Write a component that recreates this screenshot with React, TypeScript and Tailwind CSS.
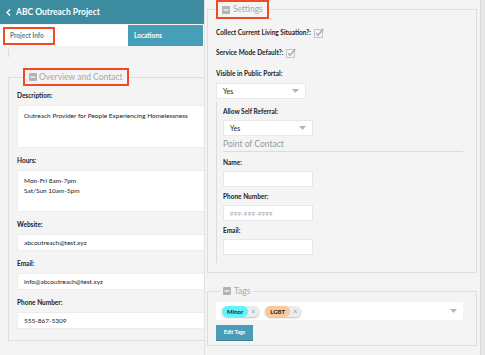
import { ReactNode } from "react";

function Minus() {
  return (
    <svg width="8" height="8" viewBox="0 0 8 8" className="shrink-0">
      <rect x="0" y="0" width="8" height="8" rx="1" fill="#b3b3b3" />
      <rect x="1.5" y="3.2" width="5" height="1.6" fill="#ececec" />
    </svg>
  );
}

function Check() {
  return (
    <svg width="10" height="10" viewBox="0 0 10 10" className="shrink-0">
      <rect x="0.5" y="1.5" width="8" height="8" fill="#f4f4f4" stroke="#c4c4c4" />
      <path d="M2.2 5.2 L4 7.2 L9.2 1.2" fill="none" stroke="#a8a8a8" strokeWidth="1.3" />
    </svg>
  );
}

function Caret() {
  return (
    <svg width="7" height="4" viewBox="0 0 7 4">
      <path d="M0 0 H7 L3.5 4 Z" fill="#b5b5b5" />
    </svg>
  );
}

function Label({ children }: { children: ReactNode }) {
  return <div className="text-[6.5px] font-bold text-[#222] leading-[8px]">{children}</div>;
}

function Field({ label, value, h = "h-[17px]", multi }: { label: string; value?: ReactNode; h?: string; multi?: boolean }) {
  return (
    <div className="flex flex-col gap-[5px]">
      <Label>{label}</Label>
      <div className={`${h} bg-white border border-[#ececec] px-[6px] ${multi ? "pt-[5px]" : "flex items-center"} text-[6.5px] text-[#222] leading-[10px]`}>
        {value}
      </div>
    </div>
  );
}

function Select({ value }: { value: string }) {
  return (
    <div className="w-[90px] h-[16px] bg-white border border-[#e8e8e8] flex items-center justify-between px-[6px] text-[7px] text-[#222]">
      <span>{value}</span>
      <Caret />
    </div>
  );
}

function SmallInput({ placeholder }: { placeholder?: string }) {
  return (
    <div className="w-[90px] h-[16px] bg-white border border-[#e8e8e8] flex items-center px-[6px] text-[6px] text-[#999] tracking-[0.3px]">
      {placeholder}
    </div>
  );
}

function Tag({ name, color }: { name: string; color: string }) {
  return (
    <div className="flex items-center h-[11px] rounded-full bg-[#ececec] shadow-[0_1px_2px_rgba(0,0,0,0.25)] pr-[4px]">
      <span className={`h-[11px] flex items-center rounded-full px-[5px] text-[6px] font-bold text-[#222] ${color}`}>{name}</span>
      <span className="ml-[3px] text-[7px] text-[#999] leading-none">×</span>
    </div>
  );
}

export default function App() {
  return (
    <div className="w-[485px] h-[355px] overflow-hidden flex bg-[#f4f4f4] font-['Lato','Liberation_Sans',sans-serif]">
      {/* left column */}
      <div className="w-[205px] shrink-0 flex flex-col border-r border-[#e2e2e2] overflow-hidden">
        <div className="h-[24px] bg-[#3c8b9e] flex items-center gap-[5px] px-[6px] text-white text-[8.5px] font-bold">
          <svg width="5" height="7" viewBox="0 0 5 7">
            <path d="M4 0.5 L1 3.5 L4 6.5" fill="none" stroke="white" strokeWidth="1.4" />
          </svg>
          <span>ABC Outreach Project</span>
        </div>
        <div className="h-[21px] flex mt-[1px] bg-white">
          <div className="w-[128px] bg-white flex items-center pl-[3px]">
            <div className="h-[18px] w-[52px] border-2 border-[#f04b24] flex items-center pl-[5px] text-[6.5px] font-bold text-[#3c8b9e]">
              Project Info
            </div>
          </div>
          <div className="w-[75px] bg-[#469fb7] flex items-center pl-[6px] text-[6.5px] font-bold text-white">Locations</div>
        </div>
        <div className="flex-1 bg-[#f4f4f4] pl-[8px]">
          <div className="ml-0 mt-[3px] h-[8px] border-l border-[#dcdcdc]" />
          <fieldset className="mt-[11px] border-l border-t border-b border-[#dedede] pl-[8px] pb-[11px] w-[210px]">
            <legend className="ml-[6px] h-[18px] border-2 border-[#f04b24] flex items-center gap-[2px] px-[4px] text-[8.5px] text-[#a8a8a8]">
              <Minus />
              <span>Overview and Contact</span>
            </legend>
            <div className="flex flex-col gap-[9px] pt-[6px]">
              <Field label="Description:" h="h-[43px]" multi value="Outreach Provider for People Experiencing Homelessness" />
              <Field
                label="Hours:"
                h="h-[42px]"
                multi
                value={
                  <>
                    <div>Mon-Fri 8am-7pm</div>
                    <div>Sat/Sun 10am-5pm</div>
                  </>
                }
              />
              <Field label="Website:" value="abcoutreach@test.xyz" />
              <Field label="Email:" value="info@abcoutreach@test.xyz" />
              <Field label="Phone Number:" value="555-867-5309" />
            </div>
          </fieldset>
        </div>
      </div>

      {/* right column */}
      <div className="flex-1 flex flex-col pl-[2px] pr-[3px]">
        <fieldset className="border border-[#dedede] pl-[8px] pr-[13px] pb-[6px] h-[273px]">
          <legend className="ml-0 h-[19px] border-2 border-[#f04b24] flex items-center gap-[3px] px-[4px] text-[8.5px] text-[#a8a8a8]">
            <Minus />
            <span>Settings</span>
          </legend>
          <div className="flex flex-col pt-[9px]">
            <div className="flex items-center gap-[3px] h-[10px]">
              <Label>Collect Current Living Situation?:</Label>
              <Check />
            </div>
            <div className="flex items-center gap-[3px] h-[10px] mt-[10px]">
              <Label>Service Mode Default?:</Label>
              <Check />
            </div>
            <div className="mt-[12px]">
              <Label>Visible in Public Portal:</Label>
            </div>
            <div className="mt-[5px]">
              <Select value="Yes" />
            </div>
            <div className="mt-[3px] border-l border-[#dcdcdc] pl-[6px] pt-[6px] pb-[8px] flex flex-col">
              <Label>Allow Self Referral:</Label>
              <div className="mt-[4px]">
                <Select value="Yes" />
              </div>
              <div className="mt-[3px] text-[8.5px] text-[#999] border-b border-[#dcdcdc] pb-[1px] leading-[11px]">Point of Contact</div>
              <div className="mt-[7px] flex flex-col gap-[4px]">
                <Label>Name:</Label>
                <SmallInput />
              </div>
              <div className="mt-[6px] flex flex-col gap-[4px]">
                <Label>Phone Number:</Label>
                <SmallInput placeholder="999-999-9999" />
              </div>
              <div className="mt-[6px] flex flex-col gap-[4px]">
                <Label>Email:</Label>
                <SmallInput />
              </div>
            </div>
          </div>
        </fieldset>

        <fieldset className="mt-[13px] border border-[#dedede] pl-[8px] pr-[13px] h-[60px]">
          <legend className="ml-[5px] flex items-center gap-[3px] px-[2px] text-[8.5px] text-[#a8a8a8] leading-[10px]">
            <Minus />
            <span>Tags</span>
          </legend>
          <div className="mt-[6px] h-[18px] bg-white flex items-center justify-between px-[6px]">
            <div className="flex items-center gap-[6px]">
              <Tag name="Minor" color="bg-[#62f3f8]" />
              <Tag name="LGBT" color="bg-[#f8c99b]" />
            </div>
            <Caret />
          </div>
          <div className="mt-[5px] w-[37px] h-[16px] bg-[#4a9db6] border-b border-[#3a8298] flex items-center justify-center text-[5.5px] font-bold text-white">
            Edit Tags
          </div>
        </fieldset>
      </div>

      {/* scrollbar strip */}
      <div className="w-[5px] shrink-0 bg-[#e6e6e6] border-l border-[#dadada]" />
    </div>
  );
}
